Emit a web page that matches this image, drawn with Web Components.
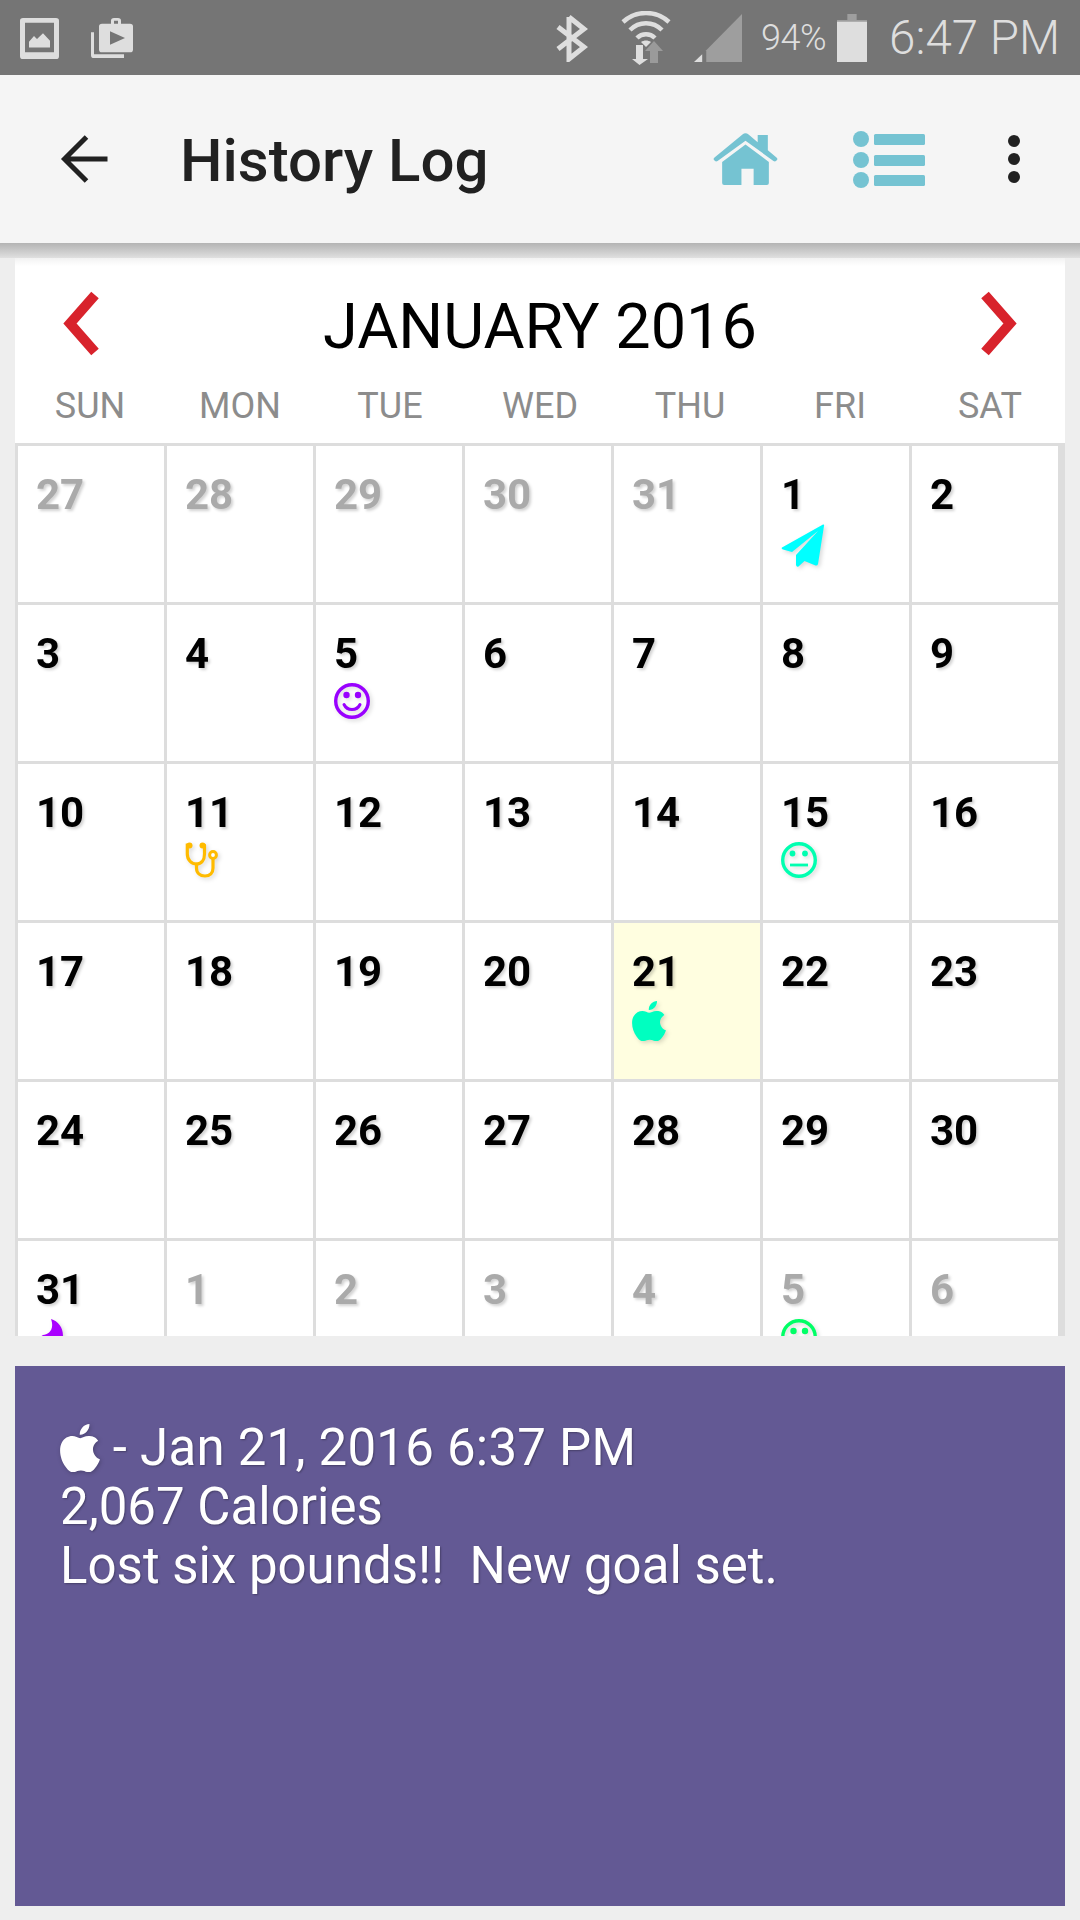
<!DOCTYPE html>
<html>
<head>
<meta charset="utf-8">
<title>History Log</title>
<style>
  html, body { margin: 0; padding: 0; background: #eeeeee; }
  body { width: 1080px; height: 1920px; overflow: hidden; font-family: Roboto, "Liberation Sans", sans-serif; }
</style>
</head>
<body>
<history-page>
  <status-bar></status-bar>
  <app-bar title="History Log"></app-bar>
  <cal-month month="JANUARY 2016"></cal-month>
  <log-note>
    <div style="letter-spacing:.22px"><note-apple></note-apple> - Jan 21, 2016 6:37 PM</div>
    <div>2,067 Calories</div>
    <div>Lost six pounds!!  New goal set.</div>
  </log-note>
</history-page>

<script>
const APPLE = 'M17.6 13.1c0-2.6 2.1-3.8 2.2-3.9-1.2-1.8-3.1-2-3.7-2-1.6-.2-3.1.9-3.9.9-.8 0-2.1-.9-3.4-.9-1.7 0-3.4 1-4.3 2.6-1.8 3.2-.5 8 1.3 10.6.9 1.3 1.9 2.7 3.3 2.6 1.3-.1 1.8-.8 3.4-.8 1.6 0 2 .8 3.4.8 1.4 0 2.3-1.3 3.2-2.6 1-1.5 1.4-2.9 1.5-3-.1 0-2.9-1.1-3-4.3zM15 5.2c.7-.9 1.2-2.1 1.1-3.3-1 0-2.3.7-3 1.5-.7.8-1.2 2-1.1 3.2 1.2.1 2.3-.6 3-1.4z';

const ICONS = {
  plane: (c) => `<svg width="44" height="44" viewBox="0 1 44 44"><path fill="${c}" d="M1 24.500 42 1.500 Q43.500 1 43 3 L37 41 Q36.500 43 34.500 42.500 L23.500 38 L17.500 43.500 Q15.500 44.500 15 42 L15 32 L37 8 L11 29 L2 26.500 Q0 25.500 1 24.500Z"/></svg>`,
  smile: (c) => `<svg width="36" height="36" viewBox="0 0 36 36"><circle cx="18" cy="18" r="16.300" fill="none" stroke="${c}" stroke-width="3.400"/><circle cx="12.500" cy="12" r="3.200" fill="${c}"/><circle cx="24" cy="12" r="3.200" fill="${c}"/><path d="M10 21.500c1.800 3.800 4.600 5 8 5s6.200-1.200 8-5" fill="none" stroke="${c}" stroke-width="3" stroke-linecap="round"/></svg>`,
  neutral: (c) => `<svg width="36" height="36" viewBox="0 0 36 36"><circle cx="18" cy="18" r="16.300" fill="none" stroke="${c}" stroke-width="3.400"/><circle cx="11.500" cy="11.500" r="2.900" fill="${c}"/><circle cx="24" cy="11.500" r="2.900" fill="${c}"/><path d="M9 23h18" stroke="${c}" stroke-width="2.800"/></svg>`,
  scope: (c) => `<svg width="34" height="36" viewBox="0 0 34 36"><g fill="none" stroke="${c}" stroke-width="3.200" stroke-linecap="round"><path d="M4 3H2.300V12C2.300 18 6.500 22 11.500 22S19.500 18 19.500 12V3"/><path d="M11.500 22V26C11.500 31 15 34 20 34S28 31 28 26V17"/></g><circle cx="4.500" cy="3.500" r="3" fill="${c}"/><circle cx="17.500" cy="3.500" r="3" fill="${c}"/><circle cx="28" cy="13" r="3.400" fill="#fff" stroke="${c}" stroke-width="3"/></svg>`,
  apple: (c) => `<svg width="34" height="40" viewBox="3.600 1.900 17 21" preserveAspectRatio="none"><path fill="${c}" d="${APPLE}"/></svg>`,
  flame: (c) => `<svg width="36" height="36" viewBox="0 0 36 36"><path fill="${c}" d="M15 0C22 2 27 8 27 17 27 27 20 32 14 32 8 32 3 28 3 22 3 19 5 17 7 16 12 16 19 11 15 0Z"/></svg>`
};

class HistoryPage extends HTMLElement {
  constructor() {
    super();
    this.attachShadow({ mode: 'open' });
    this.shadowRoot.innerHTML = `
      <style>
        :host { display: flex; flex-direction: column; width: 1080px; height: 1920px; background: #eeeeee; }
      </style>
      <slot></slot>`;
  }
}

class StatusBar extends HTMLElement {
  constructor() {
    super();
    this.attachShadow({ mode: 'open' });
    this.shadowRoot.innerHTML = `
      <style>
        :host { display: flex; align-items: center; height: 75px; background: #757575; color: #dedede; font-family: Roboto, sans-serif; font-weight: 300; padding: 0 20px; box-sizing: border-box; }
        .left { display: flex; gap: 31px; flex: 1; }
        .right { display: flex; align-items: center; }
        svg { display: block; flex: none; }
        .pct { font-size: 36px; letter-spacing: -.5px; margin: 0 11px 0 19px; white-space: nowrap; }
        .time { font-size: 47.500px; margin-left: 22px; white-space: nowrap; }
      </style>
      <div class="left">
        <svg width="40" height="42" viewBox="0 0 40 44" preserveAspectRatio="none"><path fill="#dedede" fill-rule="evenodd" d="M3 1h33q3 0 3 3v37q0 3-3 3H3q-3 0-3-3V4q0-3 3-3zM5 6v31h29V6z"/><path fill="#dedede" d="M9 32v-6l5-6 3 3 6-6 7 8v7z"/></svg>
        <svg width="42" height="42" viewBox="0 0 42 44" preserveAspectRatio="none"><path fill="#dedede" d="M0 16h3v23h30v4H3q-3 0-3-3z"/><path fill="#dedede" fill-rule="evenodd" d="M11 7h9V4q0-3 3-3h4q3 0 3 3v3h9q3 0 3 3v24q0 3-3 3H11q-3 0-3-3V10q0-3 3-3zM23 4v3h4V4zM19 15v14l15-7z"/></svg>
      </div>
      <div class="right">
        <svg width="33" height="48" viewBox="0 0 33 48"><path fill="none" stroke="#dedede" stroke-width="5" d="M14 3V45L29 33 3 13M14 3L29 15 3 35"/></svg>
        <svg style="margin-left:33px" width="50" height="54" viewBox="0 0 50 54"><g fill="none" stroke="#dedede" stroke-width="4.500"><path d="M2 11C15-1 35-1 48 11"/><path d="M9 19C18 10 32 10 41 19"/><path d="M16 27C21 22 29 22 34 27"/></g><path fill="#dedede" d="M25 36l-5-5c3-2 7-2 10 0z"/><path fill="#9a9a9a" d="M29 40h-5L33 30l9 10h-5v12h-8z"/><path fill="#dedede" d="M15 34h7v14h5L18.500 54 11 48h4z"/></svg>
        <svg style="margin-left:23px" width="48" height="48" viewBox="0 0 47 49" preserveAspectRatio="none"><path fill="#dedede" d="M8 41v8H0z"/><path fill="#9e9e9e" d="M12 37V49H47V0z"/></svg>
        <span class="pct">94%</span>
        <svg width="30" height="48" viewBox="0 0 29 49" preserveAspectRatio="none"><path fill="#9e9e9e" d="M10 0h9v6h10v6H0V6h10z"/><path fill="#dedede" d="M0 8h29v41H0z"/></svg>
        <span class="time">6:47 PM</span>
      </div>`;
  }
}

class AppBar extends HTMLElement {
  constructor() {
    super();
    this.attachShadow({ mode: 'open' });
    this.shadowRoot.innerHTML = `
      <style>
        :host { display: block; font-family: Roboto, sans-serif; }
        .bar { display: flex; align-items: center; height: 168px; background: #f5f5f5; padding: 0 60px; box-sizing: border-box; }
        .title { font-size: 60px; font-weight: 500; color: #212121; margin-left: 72px; padding-top: 2px; flex: 1; white-space: nowrap; }
        svg { display: block; flex: none; }
        .shade { height: 15px; background: linear-gradient(#b4b4b4, #d2d2d2 70%, #e0e0e0); }
      </style>
      <div class="bar">
        <svg width="48" height="48" viewBox="0 0 47 48"><path fill="none" stroke="#212121" stroke-width="5" d="M47 24H4M26 2 4 24 26 46"/></svg>
        <span class="title">${this.getAttribute('title')}</span>
        <svg width="65" height="52" viewBox="0 0 64 54" preserveAspectRatio="none"><path fill="#75c3d2" d="M44 2h10v16l8.500 7.500q1.500 1.500.5 2.500l-1 1q-1 1-2.500 0L32 8 4.500 29q-1.500 1-2.500 0l-1-1q-1-1 .5-2.500L29 1.500q3-2.500 6 0l9 8zM32 12 55 30V52q0 2-2 2H40V37H28V54H11q-2 0-2-2V30z"/></svg>
        <svg style="margin-left:75px" width="72" height="57" viewBox="0 0 72 57"><g fill="#75c3d2"><circle cx="8" cy="8" r="8"/><circle cx="8" cy="29" r="8"/><circle cx="8" cy="49" r="8"/><rect x="21" y="3" width="51" height="11" rx="1.500"/><rect x="21" y="24" width="51" height="11" rx="1.500"/><rect x="21" y="44" width="51" height="11" rx="1.500"/></g></svg>
        <svg style="margin-left:83px" width="12" height="48" viewBox="0 0 12 48"><g fill="#212121"><circle cx="6" cy="6" r="6"/><circle cx="6" cy="24" r="6"/><circle cx="6" cy="42" r="6"/></g></svg>
      </div>
      <div class="shade"></div>`;
  }
}

class CalDay extends HTMLElement {
  constructor() {
    super();
    this.attachShadow({ mode: 'open' });
    const icon = this.getAttribute('icon');
    const mark = icon ? ICONS[icon](this.getAttribute('tint')) : '';
    this.shadowRoot.innerHTML = `
      <style>
        :host { display: block; background: #fff; padding: 25px 0 0 18px; box-sizing: border-box; height: 156px; overflow: hidden; font-family: Roboto, sans-serif; }
        :host([today]) { background: #fffee0; }
        .num { font-size: 42px; font-weight: 700; line-height: 48px; color: #000; text-shadow: 2px 2px 3px rgba(0,0,0,.18); will-change: transform; }
        :host([other]) .num { color: #aaaaaa; }
        .mark { margin-top: 5px; filter: drop-shadow(2px 2px 2px rgba(0,0,0,.15)); }
        svg { display: block; }
      </style>
      <div class="num">${this.getAttribute('n')}</div>
      <div class="mark">${mark}</div>`;
  }
}

class CalMonth extends HTMLElement {
  constructor() {
    super();
    this.attachShadow({ mode: 'open' });
    const days = ['SUN', 'MON', 'TUE', 'WED', 'THU', 'FRI', 'SAT'];
    const marks = {
      1: 'icon="plane" tint="#00ffff"',
      5: 'icon="smile" tint="#9900ff"',
      11: 'icon="scope" tint="#ffbb00"',
      15: 'icon="neutral" tint="#00ffb0"',
      21: 'icon="apple" tint="#00ffc0" today',
      31: 'icon="flame" tint="#aa00ff"'
    };
    let cells = '';
    [27, 28, 29, 30, 31].forEach(n => { cells += `<cal-day n="${n}" other></cal-day>`; });
    for (let n = 1; n <= 31; n++) cells += `<cal-day n="${n}" ${marks[n] || ''}></cal-day>`;
    for (let n = 1; n <= 6; n++) {
      cells += `<cal-day n="${n}" other ${n === 5 ? 'icon="smile" tint="#00ff66"' : ''}></cal-day>`;
    }
    this.shadowRoot.innerHTML = `
      <style>
        :host { display: block; flex: none; height: 1078px; margin: 0 15px; background: linear-gradient(#f2f2f2, #fff 8px); overflow: hidden; font-family: Roboto, sans-serif; }
        .head { display: flex; align-items: center; justify-content: space-between; height: 116px; margin-top: 10px; padding: 0 48px; }
        .month { font-size: 63px; color: #000; white-space: nowrap; }
        svg { display: block; margin-bottom: 4px; }
        .week { display: grid; grid-template-columns: repeat(7, 150px); height: 58px; padding-top: 1px; font-size: 36px; line-height: 42px; color: #8c8c8c; text-align: center; }
        .grid { display: grid; grid-template-columns: repeat(7, 146px); grid-auto-rows: 156px; gap: 3px; padding: 3px 7px 3px 3px; background: #dddddd; }
      </style>
      <div class="head">
        <svg width="36" height="66" viewBox="0 0 36 66"><path fill="none" stroke="#d8232c" stroke-width="10" stroke-miterlimit="4" d="M32 4 7 32.500 32 61"/></svg>
        <span class="month">${this.getAttribute('month')}</span>
        <svg width="36" height="66" viewBox="0 0 36 66"><path fill="none" stroke="#d8232c" stroke-width="10" stroke-miterlimit="4" d="M4 4 29 32.500 4 61"/></svg>
      </div>
      <div class="week">${days.map(d => `<span>${d}</span>`).join('')}</div>
      <div class="grid">${cells}</div>`;
  }
}

class NoteApple extends HTMLElement {
  constructor() {
    super();
    this.attachShadow({ mode: 'open' });
    this.shadowRoot.innerHTML = `
      <style>
        :host { display: inline-block; width: 40px; height: 48px; vertical-align: -7px; white-space: normal; filter: drop-shadow(1px 1px 2px rgba(0,0,0,.25)); }
        svg { display: block; }
      </style>
      <svg width="40" height="48" viewBox="3.600 1.900 17 21" preserveAspectRatio="none"><path fill="#fff" d="${APPLE}"/></svg>`;
  }
}

class LogNote extends HTMLElement {
  constructor() {
    super();
    this.attachShadow({ mode: 'open' });
    this.shadowRoot.innerHTML = `
      <style>
        :host { display: block; flex: none; height: 540px; margin: 30px 15px 0; padding: 52px 45px 0; box-sizing: border-box; background: #635994; color: #fff; font-family: Roboto, sans-serif; font-size: 51px; line-height: 59px; text-shadow: 1px 1px 2px rgba(0,0,0,.3); }
        ::slotted(div) { white-space: pre; height: 59px; }
      </style>
      <slot></slot>`;
  }
}

customElements.define('history-page', HistoryPage);
customElements.define('status-bar', StatusBar);
customElements.define('app-bar', AppBar);
customElements.define('cal-day', CalDay);
customElements.define('cal-month', CalMonth);
customElements.define('note-apple', NoteApple);
customElements.define('log-note', LogNote);
</script>
</body>
</html>
